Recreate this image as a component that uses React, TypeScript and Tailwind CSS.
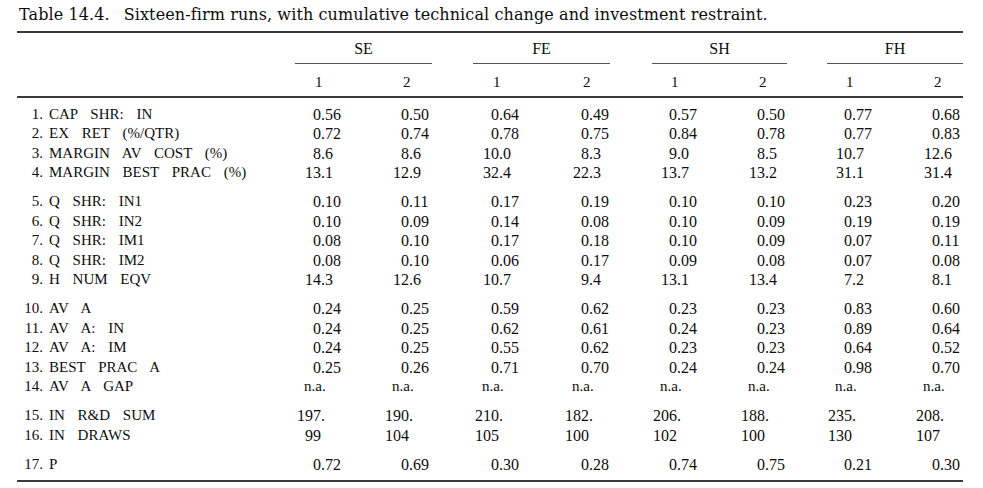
import React from "react";

// Table 14.4 — sixteen-firm runs. Numbers line up on the decimal point, as in the book.
const cols = "grid grid-cols-[274px_88px_90px_90px_88px_88px_87px_88px_53px]";

type Row = { n: number; label: string; v: string[] };

const groups: Row[][] = [
  [
    { n: 1, label: "CAP SHR: IN", v: ["0.56", "0.50", "0.64", "0.49", "0.57", "0.50", "0.77", "0.68"] },
    { n: 2, label: "EX RET (%/QTR)", v: ["0.72", "0.74", "0.78", "0.75", "0.84", "0.78", "0.77", "0.83"] },
    { n: 3, label: "MARGIN AV COST (%)", v: ["8.6", "8.6", "10.0", "8.3", "9.0", "8.5", "10.7", "12.6"] },
    { n: 4, label: "MARGIN BEST PRAC (%)", v: ["13.1", "12.9", "32.4", "22.3", "13.7", "13.2", "31.1", "31.4"] },
  ],
  [
    { n: 5, label: "Q SHR: IN1", v: ["0.10", "0.11", "0.17", "0.19", "0.10", "0.10", "0.23", "0.20"] },
    { n: 6, label: "Q SHR: IN2", v: ["0.10", "0.09", "0.14", "0.08", "0.10", "0.09", "0.19", "0.19"] },
    { n: 7, label: "Q SHR: IM1", v: ["0.08", "0.10", "0.17", "0.18", "0.10", "0.09", "0.07", "0.11"] },
    { n: 8, label: "Q SHR: IM2", v: ["0.08", "0.10", "0.06", "0.17", "0.09", "0.08", "0.07", "0.08"] },
    { n: 9, label: "H NUM EQV", v: ["14.3", "12.6", "10.7", "9.4", "13.1", "13.4", "7.2", "8.1"] },
  ],
  [
    { n: 10, label: "AV A", v: ["0.24", "0.25", "0.59", "0.62", "0.23", "0.23", "0.83", "0.60"] },
    { n: 11, label: "AV A: IN", v: ["0.24", "0.25", "0.62", "0.61", "0.24", "0.23", "0.89", "0.64"] },
    { n: 12, label: "AV A: IM", v: ["0.24", "0.25", "0.55", "0.62", "0.23", "0.23", "0.64", "0.52"] },
    { n: 13, label: "BEST PRAC A", v: ["0.25", "0.26", "0.71", "0.70", "0.24", "0.24", "0.98", "0.70"] },
    { n: 14, label: "AV A GAP", v: ["n.a.", "n.a.", "n.a.", "n.a.", "n.a.", "n.a.", "n.a.", "n.a."] },
  ],
  [
    { n: 15, label: "IN R&D SUM", v: ["197.", "190.", "210.", "182.", "206.", "188.", "235.", "208."] },
    { n: 16, label: "IN DRAWS", v: ["99", "104", "105", "100", "102", "100", "130", "107"] },
  ],
  [{ n: 17, label: "P", v: ["0.72", "0.69", "0.30", "0.28", "0.74", "0.75", "0.21", "0.30"] }],
];

const heads = ["SE", "FE", "SH", "FH"];

function Num({ v }: { v: string }) {
  if (v === "n.a.") return <div className="pl-[13px] text-[15px]">n.a.</div>;
  const i = v.indexOf(".");
  const whole = i < 0 ? v : v.slice(0, i);
  const frac = i < 0 ? "" : v.slice(i);
  return (
    <div className="flex">
      <span className="w-[30px] text-right">{whole}</span>
      <span>{frac}</span>
    </div>
  );
}

function TableRow({ row }: { row: Row }) {
  return (
    <div className={`${cols} h-[19.5px] leading-[19.5px]`}>
      <div className="flex text-[15px]">
        <span className="w-[26px] text-right">{row.n}.</span>
        <span className="ml-[6px] [word-spacing:9px]">{row.label}</span>
      </div>
      {row.v.map((v, i) => (
        <div key={i} className="text-[16px]">
          <Num v={v} />
        </div>
      ))}
    </div>
  );
}

export default function App() {
  return (
    <div className="min-h-[488px] bg-white text-[#0d0d0d] font-['Liberation_Serif',serif]">
      <div className="w-[963px] pl-[17px] pt-[5px]">
        <div className="pl-[2px] text-[16px] leading-[20px] tracking-[0.1px] font-['DejaVu_Serif',serif]">
          <span>Table 14.4.</span>
          <span className="ml-[14px]">
            Sixteen-firm runs, with cumulative technical change and investment restraint.
          </span>
        </div>
        <div className="mt-[6px] h-[2px] bg-[#3a3a3a]" />

        <div className={`${cols} mt-[6px]`}>
          <div />
          {heads.map((h, i) => (
            <div key={h} className="col-span-2">
              <div className={i === 3 ? "ml-[5px]" : i === 2 ? "ml-[5px] mr-[35px]" : "ml-[4px] mr-[37px]"}>
                <div className="text-center text-[16px] leading-[20px]">{h}</div>
                <div className="mt-[4px] h-px bg-[#555]" />
              </div>
            </div>
          ))}
        </div>

        <div className={`${cols} mt-[8px] text-[15px] leading-[20px]`}>
          <div />
          {heads.flatMap((h) =>
            ["1", "2"].map((d) => (
              <div key={h + d} className="pl-[24px]">
                {d}
              </div>
            ))
          )}
        </div>
        <div className="mt-[4px] h-[1.5px] bg-[#3a3a3a]" />

        <div className="mt-[7px]">
          {groups.map((g, gi) => (
            <div key={gi} className={gi === 0 ? "" : "mt-[9.5px]"}>
              {g.map((r) => (
                <TableRow key={r.n} row={r} />
              ))}
            </div>
          ))}
        </div>
        <div className="mt-[5.5px] h-[2px] bg-[#3a3a3a]" />
      </div>
    </div>
  );
}
